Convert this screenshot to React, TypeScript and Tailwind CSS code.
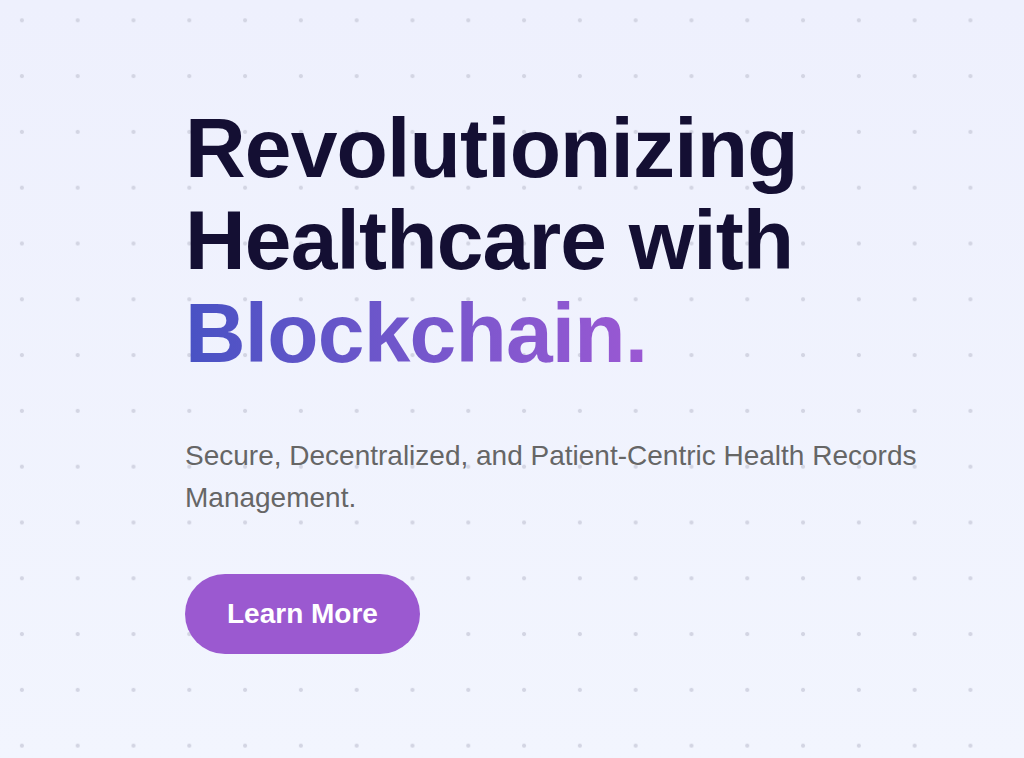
import React from 'react';

const App: React.FC = () => {
  return (
    <div className="min-h-screen w-full bg-gradient-to-b from-[#eef0fd] to-[#f2f5fe] font-['Liberation_Sans',Arial,sans-serif]">
      {/* dotted grid */}
      <div className="min-h-screen w-full bg-[radial-gradient(circle,#d3d5e3_1.8px,transparent_2.3px)] bg-[size:55.8px_55.8px] bg-[position:-6px_-7.6px]">
        <section className="pl-[185px] pr-8 pt-[102px] pb-16">
          <h1 className="text-[84px] leading-[1.1] font-bold tracking-[-0.01em] text-[#140f33] mb-[56px]">
            Revolutionizing
            <br />
            Healthcare with
            <br />
            <span className="bg-gradient-to-r from-[#4852c4] to-[#9b58d3] bg-clip-text text-transparent">
              Blockchain.
            </span>
          </h1>

          <p className="max-w-[760px] text-[28px] leading-[1.5] text-[#666666] mb-[55px]">
            Secure, Decentralized, and Patient-Centric Health Records Management.
          </p>

          <button className="h-[80px] px-[42px] rounded-full bg-[#9b59d0] text-white text-[28px] font-bold">
            Learn More
          </button>
        </section>
      </div>
    </div>
  );
};

export default App;
